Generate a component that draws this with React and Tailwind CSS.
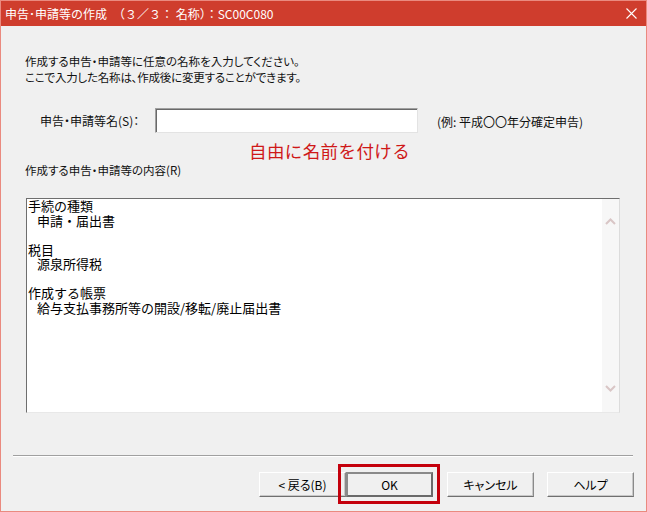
import React from "react";

const ui = "font-['Noto_Sans_CJK_JP','Noto_Sans_CJK_SC',sans-serif] [font-feature-settings:'palt']";
const jp = "font-['Noto_Sans_CJK_JP','Noto_Sans_CJK_SC',sans-serif]";

const Chevron = ({ down }) => (
  <svg width="11" height="7" viewBox="0 0 11 7" className="block">
    <polyline
      points={down ? "1,1 5.5,5.5 10,1" : "1,6 5.5,1.5 10,6"}
      fill="none"
      stroke="#d9c6c6"
      strokeWidth="2"
    />
  </svg>
);

const Button = ({ children, isDefault }) => (
  <button
    className={`relative w-[87px] h-[25px] bg-[#f0f0f0] text-[12px] text-black ${ui} ${
      isDefault
        ? "border-2 border-t-[#8a8a8a] border-l-[#8a8a8a] border-r-[#6a6a6a] border-b-[#6a6a6a]"
        : "border border-t-white border-l-white border-r-[#8a8a8a] border-b-[#6f6f6f] shadow-[inset_-1px_-1px_0_#c8c8c8]"
    }`}
  >
    {children}
    {isDefault && (
      /* annotation box round OK */
      <span className="absolute -left-[10px] -top-[10px] -right-[9px] -bottom-[9px] border-[3px] border-[#c4000c] pointer-events-none" />
    )}
  </button>
);

const lines = [
  { t: "手続の種類" },
  { t: "申請・届出書", indent: true },
  { t: "" },
  { t: "税目" },
  { t: "源泉所得税", indent: true },
  { t: "" },
  { t: "作成する帳票" },
  { t: "給与支払事務所等の開設/移転/廃止届出書", indent: true },
];

export default function App() {
  return (
    <div className="w-[647px] h-[512px] border border-[#ea8a7f] bg-[#f0f0f0] flex flex-col overflow-hidden">
      {/* Title bar */}
      <div className="h-[25px] bg-[#cf3d2d] flex items-center justify-between pl-[4px] pr-[9px] text-white">
        <span className={`text-[12px] ${jp}`}>
          申告･申請等の作成　（３／３： 名称）：SC00C080
        </span>
        <svg width="11" height="11" viewBox="0 0 11 11">
          <path d="M0.5 0.5 L10.5 10.5 M10.5 0.5 L0.5 10.5" stroke="white" strokeWidth="1.1" />
        </svg>
      </div>

      {/* Body */}
      <div className={`flex flex-col text-[11.5px] text-[#111] ${ui}`}>
        <div className="mt-[27px] pl-[24px] leading-[16px]">
          <div>作成する申告・申請等に任意の名称を入力してください。</div>
          <div className="tracking-[-0.2px]">ここで入力した名称は、作成後に変更することができます。</div>
        </div>

        <div className="mt-[23px] h-[25px] flex items-center">
          <div className="w-[154px] pl-[39px] text-[12px]">申告・申請等名(S)：</div>
          <input
            className="w-[263px] h-[25px] bg-white border border-t-[#a0a0a0] border-l-[#a0a0a0] border-r-[#e3e3e3] border-b-[#e3e3e3] shadow-[inset_1px_1px_0_#696969] outline-none"
            defaultValue=""
          />
          <div className="ml-[19px] pt-[3px] text-[12px]">(例: 平成〇〇年分確定申告)</div>
        </div>

        <div className={`mt-[8px] pl-[248px] text-[17.5px] leading-[20px] tracking-[0.4px] text-[#cf1818] ${jp} [font-feature-settings:normal]`}>
          自由に名前を付ける
        </div>

        <div className="mt-[1px] pl-[24px] leading-[16px]">作成する申告・申請等の内容(R)</div>

        {/* Contents box */}
        <div className="mt-[20px] ml-[25px] w-[594px] h-[215px] bg-white flex border border-t-[#6e6e6e] border-l-[#6e6e6e] border-r-[#dcdcdc] border-b-[#e8e8e8]">
          <div className="flex-1 pl-[1px] text-[13px] leading-[14.5px] text-black [font-feature-settings:normal] font-['Noto_Sans_CJK_JP',sans-serif]">
            {lines.map((l, i) => (
              <div key={i} className={`h-[14.5px] whitespace-nowrap ${l.indent ? "pl-[9px]" : ""}`}>
                {l.t}
              </div>
            ))}
          </div>
          <div className="w-[17px] bg-[#f7f7f7] flex flex-col items-center justify-between pt-[19px] pb-[20px]">
            <Chevron />
            <Chevron down />
          </div>
        </div>

        {/* separator */}
        <div className="mt-[42px] ml-[12px] w-[620px] border-t border-t-[#a0a0a0] border-b border-b-white" />

        <div className="mt-[15px] flex pl-[258px]">
          <Button>&lt; 戻る(B)</Button>
          <Button isDefault>OK</Button>
          <div className="ml-[14px]">
            <Button>キャンセル</Button>
          </div>
          <div className="ml-[13px]">
            <Button>ヘルプ</Button>
          </div>
        </div>
      </div>
    </div>
  );
}
